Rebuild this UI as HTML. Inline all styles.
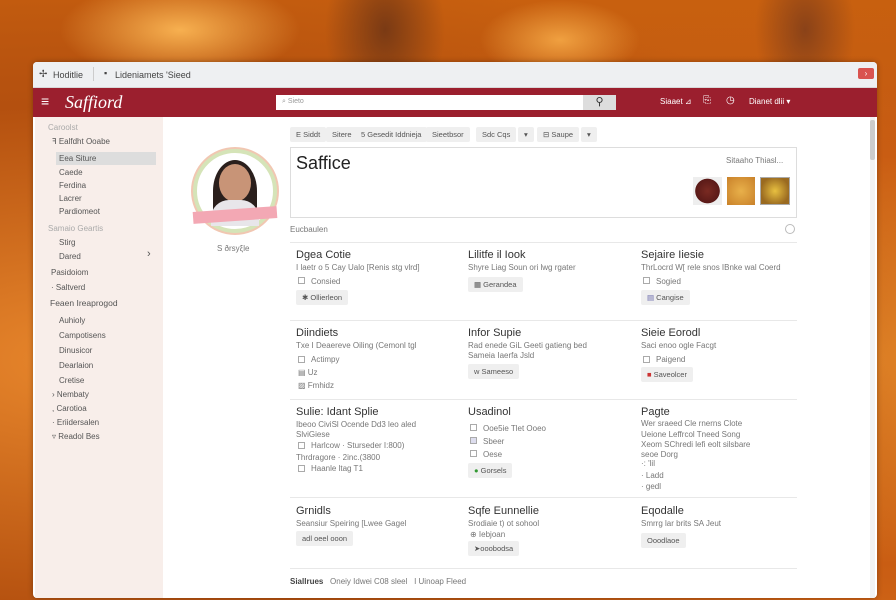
<!DOCTYPE html>
<html><head><meta charset="utf-8"><style>
*{margin:0;padding:0;box-sizing:border-box}
body{width:896px;height:600px;overflow:hidden;position:relative;font-family:"Liberation Sans",sans-serif;color:#333;
background:radial-gradient(ellipse 60px 90px at 385px 30px,#7a3a14 0,transparent 100%),radial-gradient(ellipse 50px 80px at 805px 30px,#8a4218 0,transparent 100%),radial-gradient(ellipse 120px 50px at 180px 30px,#f7b050 0,transparent 100%),radial-gradient(ellipse 80px 40px at 560px 40px,#f0a040 0,transparent 100%),radial-gradient(ellipse at 10% 60%,#e8872c 0,#b4500f 50%,transparent 80%),radial-gradient(ellipse at 95% 60%,#f39a32 0,#c95d13 40%,transparent 70%),linear-gradient(180deg,#c8600f,#b4520f 60%,#d8701c);}
.a{position:absolute}
.win{left:33px;top:62px;width:844px;height:536px;background:#fff;border-radius:4px;overflow:hidden;box-shadow:0 0 6px rgba(0,0,0,.3)}
.tb{left:0;top:0;width:844px;height:26px;background:#eef0f2;border-bottom:1px solid #d8d8d8;font-size:9px;color:#444}
.hd{left:0;top:26px;width:844px;height:29px;background:#9b1f2e}
.sb{left:2px;top:55px;width:128px;height:481px;background:#f8eeea;font-size:8px;color:#555}
.sb div{position:absolute}
.t{font-size:8px;color:#777;white-space:nowrap}
.h{font-size:11px;color:#333;white-space:nowrap}
.btn{position:absolute;background:#efefef;border-radius:2px;font-size:7.5px;color:#555;padding:0 6px;line-height:15px;height:15px;white-space:nowrap}
.cb{position:absolute;width:7px;height:7px;border:1px solid #aaa;background:#fff}
.hr{position:absolute;left:257px;width:507px;height:1px;background:#e8e8e8}
</style></head><body>
<div class="a win">
 <div class="a tb">
  <span class="a" style="left:6px;top:7px;font-size:10px">✢</span>
  <span class="a" style="left:20px;top:8px">Hoditlie</span>
  <span class="a" style="left:60px;top:5px;width:1px;height:14px;background:#ccc"></span>
  <span class="a" style="left:71px;top:6px;font-size:9px">▪</span>
  <span class="a" style="left:82px;top:8px">Lideniamets 'Sieed</span>
  <span class="a" style="left:825px;top:6px;width:16px;height:11px;background:#d9534f;border-radius:2px;color:#fff;font-size:8px;text-align:center;line-height:11px">›</span>
 </div>
 <div class="a hd">
  <span class="a" style="left:8px;top:5px;color:#fff;font-size:14px">≡</span>
  <span class="a" style="left:32px;top:4px;color:#fff;font-family:'Liberation Serif',serif;font-style:italic;font-size:18px">Saffiord</span>
  <div class="a" style="left:243px;top:7px;width:307px;height:15px;background:#fff"><span class="a" style="left:6px;top:3px;font-size:7px;color:#999">⌕ Sieto</span></div>
  <div class="a" style="left:550px;top:7px;width:33px;height:15px;background:#ddd;text-align:center;font-size:11px;line-height:15px;color:#333">⚲</div>
  <span class="a" style="left:627px;top:9px;color:#fff;font-size:8px">Siaaet ⊿</span>
  <span class="a" style="left:670px;top:7px;color:#fff;font-size:10px">⎘</span>
  <span class="a" style="left:693px;top:7px;color:#fff;font-size:10px">◷</span>
  <span class="a" style="left:716px;top:9px;color:#fff;font-size:8px">Dianet dlii ▾</span>
 </div>
 <div class="a sb">
  <div style="left:13px;top:6px;color:#aaa">Caroolst</div>
  <div style="left:17px;top:20px">ꟻ Ealfdht Ooabe</div>
  <div style="left:21px;top:35px;width:100px;height:13px;background:#ddd"></div>
  <div style="left:24px;top:37px">Eea Siture</div>
  <div style="left:24px;top:51px">Caede</div>
  <div style="left:24px;top:64px">Ferdina</div>
  <div style="left:24px;top:77px">Lacrer</div>
  <div style="left:24px;top:90px">Pardiomeot</div>
  <div style="left:13px;top:107px;color:#aaa">Samaio Geartis</div>
  <div style="left:24px;top:121px">Stirg</div>
  <div style="left:24px;top:135px">Dared</div>
  <div style="left:112px;top:131px;font-size:11px">›</div>
  <div style="left:16px;top:151px">Pasidoiom</div>
  <div style="left:16px;top:166px">· Saltverd</div>
  <div style="left:15px;top:181px;font-size:8.5px">Feaen Ireaprogod</div>
  <div style="left:24px;top:199px">Auhioly</div>
  <div style="left:24px;top:214px">Campotisens</div>
  <div style="left:24px;top:229px">Dinusicor</div>
  <div style="left:24px;top:244px">Dearlaion</div>
  <div style="left:24px;top:259px">Cretise</div>
  <div style="left:17px;top:273px">› Nembaty</div>
  <div style="left:17px;top:287px">, Carotioa</div>
  <div style="left:17px;top:301px">· Eriidersalen</div>
  <div style="left:17px;top:315px">▿ Readol Bes</div>
 </div>
 <!-- avatar -->
 <div class="a" style="left:160px;top:87px;width:84px;height:84px;border-radius:50%;border:4px solid #d5e4b8;background:#fff;box-shadow:0 0 0 2px #f1c7b2"></div>
 <div class="a" style="left:180px;top:98px;width:44px;height:62px;border-radius:50% 50% 0 0;background:#2a1f1c"></div>
 <div class="a" style="left:186px;top:102px;width:32px;height:38px;border-radius:50%;background:#c89477"></div>
 <div class="a" style="left:178px;top:138px;width:48px;height:26px;border-radius:18px 18px 0 0;background:#e8e6ea"></div>
 <div class="a" style="left:160px;top:147px;width:84px;height:12px;background:#f3a8b4;transform:rotate(-4deg)"></div>
 <span class="a t" style="left:184px;top:182px">S ðrsyξle</span>
 <!-- toolbar -->
 <div class="btn" style="left:257px;top:65px">E Siddt</div>
 <div class="btn" style="left:293px;top:65px">Sitere</div>
 <div class="btn" style="left:322px;top:65px">5 Gesedit Iddnieja</div>
 <div class="btn" style="left:393px;top:65px">Sieetbsor</div>
 <div class="btn" style="left:443px;top:65px">Sdc Cqs</div>
 <div class="btn" style="left:485px;top:65px">▾</div>
 <div class="btn" style="left:504px;top:65px">⊟ Saupe</div>
 <div class="btn" style="left:548px;top:65px">▾</div>
 <!-- editor -->
 <div class="a" style="left:257px;top:85px;width:507px;height:71px;border:1px solid #ddd"></div>
 <span class="a" style="left:263px;top:91px;font-size:18px;color:#222">Saffice</span>
 <span class="a t" style="left:693px;top:94px">Sitaaho Thiasl...</span>
 <div class="a" style="left:660px;top:115px;width:29px;height:28px;background:radial-gradient(circle,#7a2a22,#5a1a18 60%,#eee 62%)"></div>
 <div class="a" style="left:694px;top:115px;width:28px;height:28px;background:radial-gradient(circle,#e8b04a,#c9812a)"></div>
 <div class="a" style="left:727px;top:115px;width:30px;height:28px;background:radial-gradient(circle,#e8c040,#9a6a20 75%);border:1px solid #aaa"></div>
 <span class="a t" style="left:257px;top:163px">Eucbaulen</span>
 <span class="a" style="left:752px;top:162px;width:10px;height:10px;border:1px solid #bbb;border-radius:50%"></span>
 <div class="hr" style="top:180px"></div>
 <!-- row1 -->
 <div class="a h" style="left:263px;top:187px">Dgea Cotie</div>
 <div class="a t" style="left:263px;top:201px">I laetr o 5 Cay Ualo [Renis stg vlrd]</div>
 <div class="cb" style="left:265px;top:215px"></div><div class="a t" style="left:278px;top:215px">Consied</div>
 <div class="btn" style="left:263px;top:228px">✱ Ollierleon</div>
 <div class="a h" style="left:435px;top:187px">Lilitfe il Iook</div>
 <div class="a t" style="left:435px;top:201px">Shyre Liag Soun ori lwg rgater</div>
 <div class="btn" style="left:435px;top:215px">▦ Gerandea</div>
 <div class="a h" style="left:608px;top:187px">Sejaire Iiesie</div>
 <div class="a t" style="left:608px;top:201px">ThrLocrd W[ rele snos IBnke wal Coerd</div>
 <div class="cb" style="left:610px;top:215px"></div><div class="a t" style="left:623px;top:215px">Sogied</div>
 <div class="btn" style="left:608px;top:228px"><span style="color:#66a">▤</span> Cangise</div>
 <div class="hr" style="top:258px"></div>
 <!-- row2 -->
 <div class="a h" style="left:263px;top:265px">Diindiets</div>
 <div class="a t" style="left:263px;top:279px">Txe I Deaereve Oiling (Cemonl tgl</div>
 <div class="cb" style="left:265px;top:294px"></div><div class="a t" style="left:278px;top:293px">Actimpy</div>
 <div class="a t" style="left:265px;top:306px">▤ Uz</div>
 <div class="a t" style="left:265px;top:319px">▨ Fmhidz</div>
 <div class="a h" style="left:435px;top:265px">Infor Supie</div>
 <div class="a t" style="left:435px;top:279px">Rad enede GiL Geeti gatieng bed</div>
 <div class="a t" style="left:435px;top:289px">Sameia Iaerfa Jsld</div>
 <div class="btn" style="left:435px;top:302px">w Sameeso</div>
 <div class="a h" style="left:608px;top:265px">Sieie Eorodl</div>
 <div class="a t" style="left:608px;top:279px">Saci enoo ogle Facgt</div>
 <div class="cb" style="left:610px;top:294px"></div><div class="a t" style="left:623px;top:293px">Paigend</div>
 <div class="btn" style="left:608px;top:305px"><span style="color:#c33">■</span> Saveolcer</div>
 <div class="hr" style="top:337px"></div>
 <!-- row3 -->
 <div class="a h" style="left:263px;top:344px">Sulie: Idant Splie</div>
 <div class="a t" style="left:263px;top:358px">Ibeoo CiviSl Ocende Dd3 leo aled</div>
 <div class="a t" style="left:263px;top:368px">SlviGiese</div>
 <div class="cb" style="left:265px;top:380px"></div><div class="a t" style="left:278px;top:379px">Harlcow · Sturseder I:800)</div>
 <div class="a t" style="left:263px;top:391px">Thrdragore · 2inc.(3800</div>
 <div class="cb" style="left:265px;top:403px"></div><div class="a t" style="left:278px;top:402px">Haanle ltag T1</div>
 <div class="a h" style="left:435px;top:344px">Usadinol</div>
 <div class="cb" style="left:437px;top:362px"></div><div class="a t" style="left:450px;top:362px">Ooe5ie Tlet Ooeo</div>
 <div class="cb" style="left:437px;top:375px;background:#dde"></div><div class="a t" style="left:450px;top:375px">Sbeer</div>
 <div class="cb" style="left:437px;top:388px"></div><div class="a t" style="left:450px;top:388px">Oese</div>
 <div class="btn" style="left:435px;top:401px"><span style="color:#393">●</span> Gorsels</div>
 <div class="a h" style="left:608px;top:344px">Pagte</div>
 <div class="a t" style="left:608px;top:357px">Wer sraeed Cle rnerns Clote</div>
 <div class="a t" style="left:608px;top:368px">Ueione Leffrcol Tneed Song</div>
 <div class="a t" style="left:608px;top:378px">Xeom SChredi lefi eolt silsbare</div>
 <div class="a t" style="left:608px;top:388px">seoe Dorg</div>
 <div class="a t" style="left:608px;top:397px">·: 'lil</div>
 <div class="a t" style="left:608px;top:409px">· Ladd</div>
 <div class="a t" style="left:608px;top:420px">· gedl</div>
 <div class="hr" style="top:435px"></div>
 <!-- row4 -->
 <div class="a h" style="left:263px;top:443px">Grnidls</div>
 <div class="a t" style="left:263px;top:457px">Seansiur Speiring [Lwee Gagel</div>
 <div class="btn" style="left:263px;top:469px">adl oeel ooon</div>
 <div class="a h" style="left:435px;top:443px">Sqfe Eunnellie</div>
 <div class="a t" style="left:435px;top:457px">Srodiaie t) ot sohool</div>
 <div class="a t" style="left:437px;top:468px">⊕ Iebjoan</div>
 <div class="btn" style="left:435px;top:479px">➤ooobodsa</div>
 <div class="a h" style="left:608px;top:443px">Eqodalle</div>
 <div class="a t" style="left:608px;top:457px">Smrrg lar brits SA Jeut</div>
 <div class="btn" style="left:608px;top:471px">Ooodlaoe</div>
 <div class="hr" style="top:506px"></div>
 <div class="a t" style="left:257px;top:515px"><b style="color:#444">Siallrues</b> &nbsp; Oneiy Idwei C08 sleel &nbsp; I Uinoap Fleed</div>
 <!-- scrollbar -->
 <div class="a" style="left:837px;top:55px;width:5px;height:481px;background:#f2f2f2"></div>
 <div class="a" style="left:837px;top:58px;width:5px;height:40px;background:#ccc;border-radius:2px"></div>
</div>
</body></html>
